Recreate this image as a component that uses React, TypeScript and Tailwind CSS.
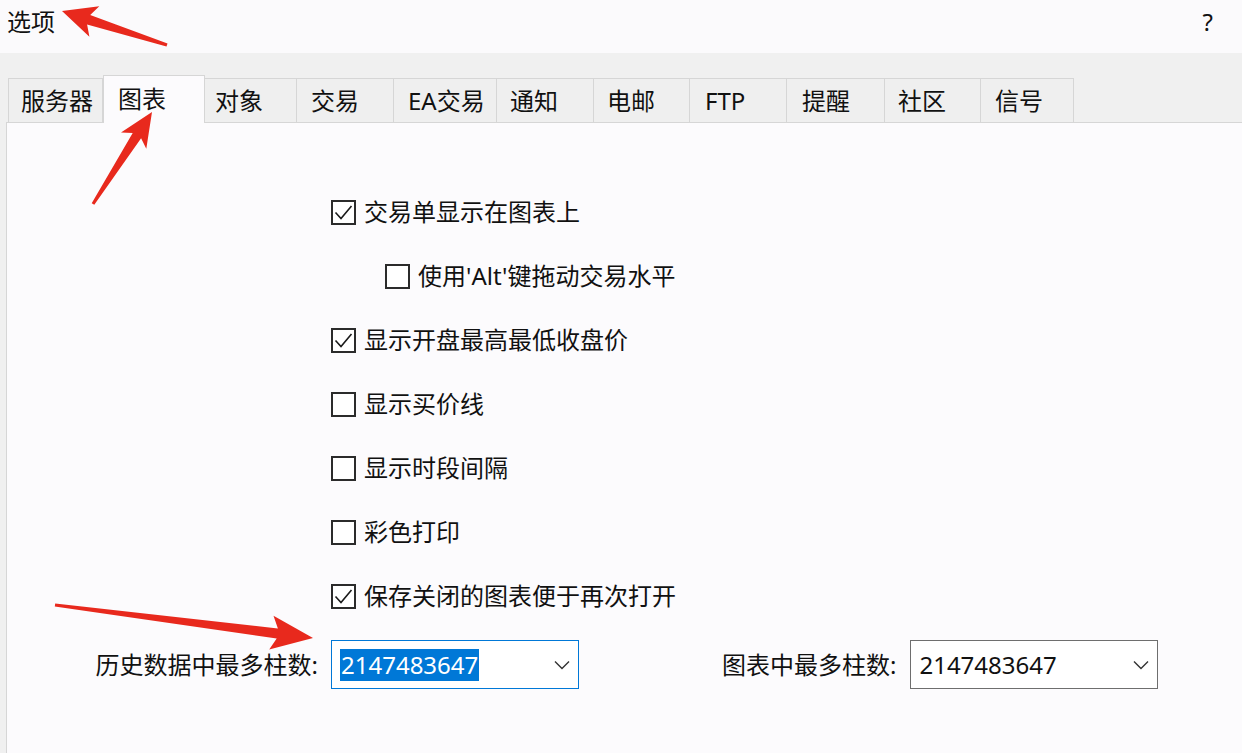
import React from "react";

type Pt = [number, number];

function arrowPoints(
  t: Pt,
  p: Pt,
  headLen: number,
  headW: number,
  shaftW: number,
  tailW: number
): string {
  const dx = p[0] - t[0];
  const dy = p[1] - t[1];
  const len = Math.hypot(dx, dy);
  const ux = dx / len;
  const uy = dy / len;
  const nx = -uy;
  const ny = ux;
  const bx = p[0] - ux * headLen;
  const by = p[1] - uy * headLen;
  const barbBack = 6;
  const pts: Pt[] = [
    [t[0] + nx * tailW, t[1] + ny * tailW],
    [bx + nx * shaftW, by + ny * shaftW],
    [bx - ux * barbBack + nx * headW, by - uy * barbBack + ny * headW],
    [p[0], p[1]],
    [bx - ux * barbBack - nx * headW, by - uy * barbBack - ny * headW],
    [bx - nx * shaftW, by - ny * shaftW],
    [t[0] - nx * tailW, t[1] - ny * tailW],
  ];
  return pts.map((q) => `${q[0].toFixed(1)},${q[1].toFixed(1)}`).join(" ");
}

const FONT = {
  fontFamily: '"Noto Sans", "Noto Sans CJK SC", sans-serif',
};

const tabs: { label: string; w: string; pl: string }[] = [
  { label: "服务器", w: "w-[95px]", pl: "pl-[12px]" },
  { label: "图表", w: "w-[102px]", pl: "pl-[14px]" },
  { label: "对象", w: "w-[92px]", pl: "pl-[10px]" },
  { label: "交易", w: "w-[97px]", pl: "pl-[14px]" },
  { label: "EA交易", w: "w-[103px]", pl: "pl-[14px]" },
  { label: "通知", w: "w-[97px]", pl: "pl-[13px]" },
  { label: "电邮", w: "w-[96px]", pl: "pl-[13px]" },
  { label: "FTP", w: "w-[97px]", pl: "pl-[15px]" },
  { label: "提醒", w: "w-[98px]", pl: "pl-[15px]" },
  { label: "社区", w: "w-[96px]", pl: "pl-[13px]" },
  { label: "信号", w: "w-[93px]", pl: "pl-[14px]" },
];

function CheckBox({ checked }: { checked: boolean }) {
  return (
    <div className="w-[25px] h-[25px] border-2 border-[#2b2b2b] bg-white flex items-center justify-center shrink-0">
      {checked && (
        <svg width="21" height="21" viewBox="0 0 21 21">
          <polyline
            points="2.5,10.5 8,16.5 18.5,4"
            fill="none"
            stroke="#1a1a1a"
            strokeWidth="1.6"
          />
        </svg>
      )}
    </div>
  );
}

function CheckRow({
  checked,
  label,
  indent,
}: {
  checked: boolean;
  label: string;
  indent?: boolean;
}) {
  return (
    <div className={`flex items-center h-[32px] gap-[8px] ${indent ? "ml-[54px]" : ""}`}>
      <CheckBox checked={checked} />
      <span className="text-[24px] leading-none text-[#111] whitespace-nowrap">{label}</span>
    </div>
  );
}

function Chevron() {
  return (
    <svg width="16" height="10" viewBox="0 0 16 10" className="shrink-0">
      <polyline points="1,1.5 8,8.5 15,1.5" fill="none" stroke="#333" strokeWidth="1.4" />
    </svg>
  );
}

export default function App() {
  return (
    <div
      className="relative w-[1242px] h-[753px] overflow-hidden bg-[#f0f0f0] flex flex-col"
      style={FONT}
    >
      {/* Title bar */}
      <div className="h-[53px] shrink-0 bg-[#fbfafc] flex items-center justify-between pl-[7px] pr-[29px]">
        <span className="text-[24px] leading-none text-[#111] -mt-[10px]">选项</span>
        <span className="text-[24px] leading-none text-[#111] -mt-[10px]">?</span>
      </div>

      {/* Tab strip + panel */}
      <div className="flex-1 flex flex-col pl-[6px]">
        <div className="h-[69px] shrink-0 flex items-end pl-[2px] relative z-10">
          {tabs.map((t, i) =>
            i === 1 ? (
              <div
                key={t.label}
                className={`${t.w} h-[48px] -mb-[1px] bg-[#fcfbfd] border-l border-t border-r border-[#d6d6d6] flex items-start pt-[8px] ${t.pl}`}
              >
                <span className="text-[24px] leading-[30px] text-[#111] whitespace-nowrap">
                  {t.label}
                </span>
              </div>
            ) : (
              <div
                key={t.label}
                className={`${t.w} h-[44px] bg-[#efefef] border-t border-r border-[#d6d6d6] ${
                  i === 0 ? "border-l" : ""
                } flex items-center ${t.pl}`}
              >
                <span className="text-[24px] leading-none text-[#111] whitespace-nowrap">
                  {t.label}
                </span>
              </div>
            )
          )}
        </div>

        <div className="flex-1 bg-[#fcfbfd] border-l border-t border-[#d6d6d6] flex flex-col">
          <div className="flex flex-col gap-[32px] pl-[324px] pt-[73px]">
            <CheckRow checked label="交易单显示在图表上" />
            <CheckRow checked={false} indent label="使用'Alt'键拖动交易水平" />
            <CheckRow checked label="显示开盘最高最低收盘价" />
            <CheckRow checked={false} label="显示买价线" />
            <CheckRow checked={false} label="显示时段间隔" />
            <CheckRow checked={false} label="彩色打印" />
            <CheckRow checked label="保存关闭的图表便于再次打开" />
          </div>

          <div className="flex items-center mt-[28px]">
            <div className="w-[324px] flex justify-end pr-[13px]">
              <span className="text-[24px] leading-none text-[#111] whitespace-nowrap">
                历史数据中最多柱数:
              </span>
            </div>
            <div className="w-[248px] h-[49px] border border-[#0078d7] bg-white flex items-center justify-between pl-[8px] pr-[8px]">
              <span className="bg-[#0078d7] text-white text-[24px] leading-[32px] px-[1px] h-[32px] flex items-center">
                2147483647
              </span>
              <Chevron />
            </div>

            <div className="w-[143px]" />
            <span className="text-[24px] leading-none text-[#111] whitespace-nowrap mr-[14px]">
              图表中最多柱数:
            </span>
            <div className="w-[248px] h-[49px] border-[1.5px] border-[#6e6e6e] bg-white flex items-center justify-between pl-[8px] pr-[8px]">
              <span className="text-[#111] text-[24px] leading-[32px]">2147483647</span>
              <Chevron />
            </div>
          </div>
        </div>
      </div>

      {/* Red annotation arrows */}
      <svg
        className="absolute inset-0 pointer-events-none z-20"
        width="1242"
        height="753"
        viewBox="0 0 1242 753"
      >
        <polygon points={arrowPoints([167, 45], [62, 11], 28, 16, 5, 1.5)} fill="#e8291d" />
        <polygon points={arrowPoints([93, 204], [152, 112], 28, 15, 5, 1.5)} fill="#e8291d" />
        <polygon points={arrowPoints([55, 605], [313, 638], 36, 17, 5, 1.5)} fill="#e8291d" />
      </svg>
    </div>
  );
}
